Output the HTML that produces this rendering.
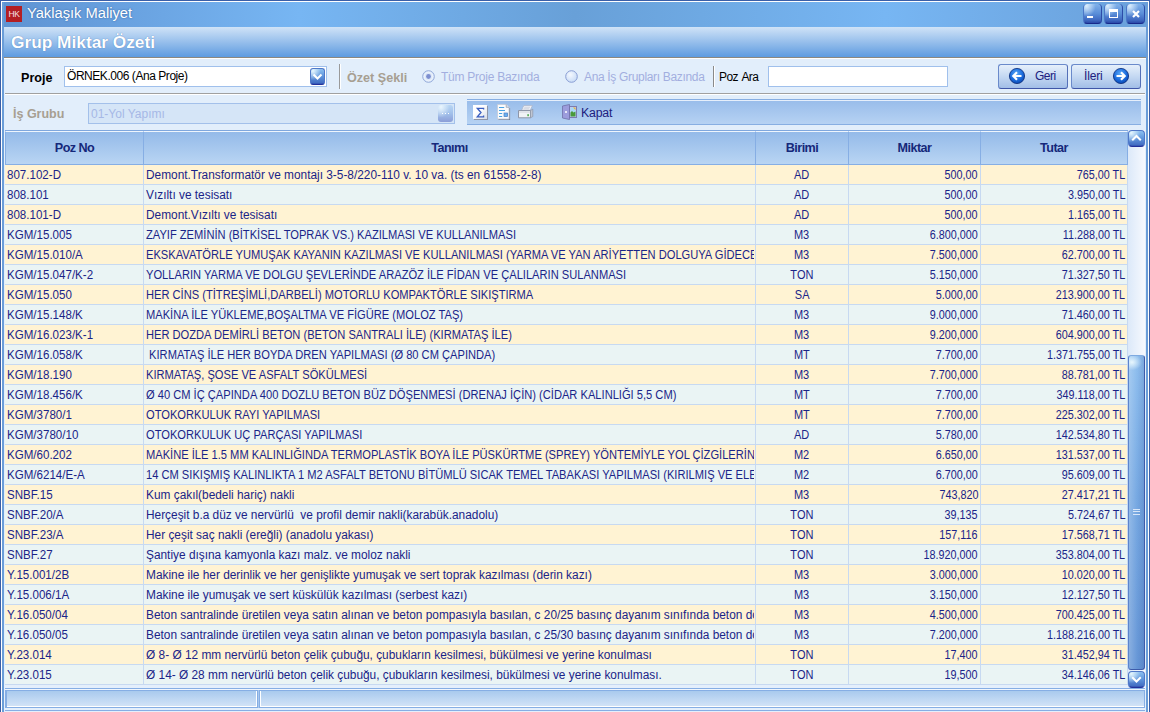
<!DOCTYPE html>
<html><head><meta charset="utf-8">
<style>
*{margin:0;padding:0;box-sizing:border-box}
html,body{width:1150px;height:712px;overflow:hidden;background:#E2EEFB;font-family:"Liberation Sans",sans-serif;font-size:12px;color:#000}
.abs{position:absolute}
svg{position:absolute;overflow:visible}
#title{position:absolute;left:0;top:0;width:1150px;height:27px;background:linear-gradient(90deg,#5F93D2 0%,#77B6F3 26%,#68A0D8 50%,#77B6F3 77%,#6AA0DA 100%)}
#hk{position:absolute;left:6px;top:6px;width:16px;height:16px;background:#B31E22;color:#F4E4E4;font-size:8.5px;line-height:16px;text-align:center;letter-spacing:-0.4px}
#ttext{position:absolute;left:27px;top:5px;font-size:14.7px;color:#fff;text-shadow:0 0 2px #3060A0}
.wb{position:absolute;top:4px;width:19px;height:20px;border-radius:4px;background:radial-gradient(ellipse at 15% 10%,rgba(230,245,255,0.9) 0%,rgba(200,230,255,0) 45%),linear-gradient(180deg,#7FB0EA 0%,#5A8ED8 50%,#3E68C0 85%,#2A48A8 100%);border-bottom:1px solid #16288A;border-right:1px solid #2C4CA8;border-left:1px solid #4C78C8}
#hdr{position:absolute;left:4px;top:27px;width:1142px;height:30px;background:linear-gradient(180deg,#D0E3F7 0%,#5E9BE0 100%)}
#hdrtext{position:absolute;left:11px;top:33px;font-size:17px;font-weight:bold;color:#fff;text-shadow:0 0 1px #4070B0}
#hline1{position:absolute;left:4px;top:57px;width:1142px;height:1px;background:#8C8880}
#hline2{position:absolute;left:4px;top:58px;width:1142px;height:1px;background:#fff}
.lbl{position:absolute;font-size:12px;white-space:nowrap}
.sep{position:absolute;width:1px;background:#8A8A8A}
.btn{position:absolute;height:25px;border:1px solid #6A8ACB;border-bottom-color:#3F56A8;border-right-color:#5470B8;border-radius:3px;background:linear-gradient(180deg,#E6F0FB 0%,#C4D8F2 50%,#A2BEE7 100%)}
#grid{position:absolute;left:5px;top:130px;width:1123px;height:1px;background:#7FA7DE}
.hc{position:absolute;top:131px;height:34px;border-right:1px solid #86AEE4;border-bottom:1px solid #86AEE4;border-top:1px solid #EEF5FD;background:linear-gradient(180deg,#94BAE9 0%,#B9D5F3 100%);font-weight:bold;color:#15287A;text-align:center;line-height:32px;font-size:12.6px;letter-spacing:-0.55px}
.r{position:absolute;left:5px;width:1123px;height:20px}
.r.o{background:#FFF3D3}
.r.e{background:#EAF4F4}
.c{position:absolute;top:0;height:20px;border-right:1px solid #C7D9F1;border-bottom:1px solid #C7D9F1;line-height:20px;color:#1A2488;white-space:pre;overflow:hidden;padding:0 2px;font-size:12.3px}
.c span{display:inline-block;transform-origin:0 50%}
.c1{left:0;width:139px}
.c1 span{transform:scaleX(0.94)}
.c2{left:139px;width:612px;padding-left:2px}
.c2 span{transform:scaleX(0.965)}
.clip{width:608px;overflow:hidden}
.c2.u span{transform:scaleX(0.905)}
.c3{left:751px;width:93px;text-align:center}
.c3 span{transform:scaleX(0.894);transform-origin:50% 50%}
.c4{left:844px;width:132px;text-align:right}
.c5{left:976px;width:147px;text-align:right}
.c4 span,.c5 span{transform:scaleX(0.878);transform-origin:100% 50%}
.sb{width:17px;height:17px;border-radius:4px;background:radial-gradient(ellipse at 15% 12%,rgba(235,250,255,0.95) 0%,rgba(200,230,255,0) 50%),linear-gradient(180deg,#8CC0F0 0%,#5E94DC 50%,#4570C4 90%,#3050B0 100%);border:1px solid #5078C8;border-bottom-color:#22309A}
</style></head><body>
<div id="title"></div>
<div id="hk">HK</div>
<div id="ttext">Yaklaşık Maliyet</div>
<div class="wb" style="left:1083px"></div>
<div class="wb" style="left:1104px"></div>
<div class="wb" style="left:1126px"></div>
<div class="abs" style="left:1087px;top:16px;width:6px;height:2px;background:#fff"></div>
<div class="abs" style="left:1109px;top:9px;width:9px;height:9px;border:1px solid #fff;border-top-width:3px"></div>
<svg style="left:1132px;top:10px" width="8" height="8" viewBox="0 0 8 8"><path d="M1 1L7 7M7 1L1 7" stroke="#fff" stroke-width="2.2"/></svg>
<div id="hdr"></div>
<div id="hdrtext" style="font-size:17.3px;top:32px">Grup Miktar Özeti</div>
<div id="hline1"></div><div id="hline2"></div>

<!-- row 1 -->
<div class="lbl" style="left:21px;top:71px;font-weight:bold;font-size:12.6px">Proje</div>
<div class="abs" style="left:64px;top:66px;width:263px;height:21px;background:#fff;border:1px solid #A0C0EC"></div>
<div class="lbl" style="left:67px;top:69px;font-size:12px;letter-spacing:-0.45px">ÖRNEK.006 (Ana Proje)</div>
<div class="abs" style="left:310px;top:68px;width:15px;height:17px;border-radius:3px;background:radial-gradient(ellipse at 15% 12%,rgba(235,250,255,0.95) 0%,rgba(200,230,255,0) 50%),linear-gradient(180deg,#8CC0F0 0%,#5E94DC 50%,#4570C4 90%,#3050B0 100%);border:1px solid #5078C8;border-bottom-color:#22309A"></div>
<svg style="left:310px;top:68px" width="15" height="17" viewBox="0 0 15 17"><path d="M3.5 6.5L7.5 10.5L11.5 6.5" stroke="#fff" stroke-width="2" fill="none"/></svg>
<div class="sep" style="left:339px;top:64px;height:25px;background:#9A9A9A"></div><div class="sep" style="left:340px;top:64px;height:25px;background:#fff"></div>
<div class="lbl" style="left:347px;top:71px;font-weight:bold;font-size:12.6px;color:#A79F92">Özet Şekli</div>
<svg style="left:422px;top:70px" width="13" height="13" viewBox="0 0 13 13"><circle cx="6.5" cy="6.5" r="5.8" fill="#DCE8F8" stroke="#94AADA" stroke-width="1"/><circle cx="6.5" cy="6.5" r="4.3" fill="none" stroke="#F2F6FD" stroke-width="0.8"/><circle cx="6.5" cy="6.5" r="2.4" fill="#7C8ED0"/></svg>
<div class="lbl" style="left:441px;top:70px;color:#A2AEDF;font-size:12px;letter-spacing:-0.25px">Tüm Proje Bazında</div>
<svg style="left:565px;top:70px" width="13" height="13" viewBox="0 0 13 13"><defs><radialGradient id="rg" cx="40%" cy="35%" r="70%"><stop offset="0" stop-color="#F4F8FE"/><stop offset="1" stop-color="#C6DAF6"/></radialGradient></defs><circle cx="6.5" cy="6.5" r="5.8" fill="url(#rg)" stroke="#8A9ED4" stroke-width="1"/></svg>
<div class="lbl" style="left:584px;top:70px;color:#A2AEDF;font-size:12px;letter-spacing:-0.33px">Ana İş Grupları Bazında</div>
<div class="sep" style="left:713px;top:66px;height:21px"></div><div class="sep" style="left:714px;top:66px;height:21px;background:#fff"></div>
<div class="lbl" style="left:719px;top:70px;font-size:12px;letter-spacing:-0.6px;word-spacing:1.5px">Poz Ara</div>
<div class="abs" style="left:768px;top:66px;width:180px;height:21px;background:#fff;border:1px solid #A0C0EC"></div>
<div class="btn" style="left:998px;top:64px;width:70px"></div>
<svg style="left:1009px;top:68px" width="16" height="16" viewBox="0 0 16 16"><defs><radialGradient id="cg" cx="45%" cy="35%" r="65%"><stop offset="0" stop-color="#5AAAF8"/><stop offset="0.65" stop-color="#1A6ADC"/><stop offset="1" stop-color="#0C48B0"/></radialGradient></defs><circle cx="8" cy="8" r="7.6" fill="url(#cg)" stroke="#082A78" stroke-width="0.8"/><path d="M12.5 8H4.5M8 4.3L4.3 8L8 11.7" stroke="#fff" stroke-width="2.2" fill="none"/></svg>
<div class="lbl" style="left:1035px;top:69px;color:#20207E;font-size:12px;letter-spacing:-0.5px">Geri</div>
<div class="btn" style="left:1071px;top:64px;width:70px"></div>
<div class="lbl" style="left:1084px;top:69px;color:#20207E;font-size:12px;letter-spacing:-0.15px">İleri</div>
<svg style="left:1113px;top:68px" width="16" height="16" viewBox="0 0 16 16"><circle cx="8" cy="8" r="7.6" fill="url(#cg)" stroke="#082A78" stroke-width="0.8"/><path d="M3.5 8H11.5M8 4.3L11.7 8L8 11.7" stroke="#fff" stroke-width="2.2" fill="none"/></svg>
<div class="abs" style="left:5px;top:93px;width:1140px;height:1px;background:#A0A0A0"></div>
<div class="abs" style="left:5px;top:94px;width:1140px;height:1px;background:#FFFFFF"></div>

<!-- row 2 -->
<div class="lbl" style="left:13px;top:107px;font-weight:bold;font-size:12.5px;color:#A79F92">İş Grubu</div>
<div class="abs" style="left:88px;top:103px;width:367px;height:21px;background:#D5E5F7;border:1px solid #A3C0EA"></div>
<div class="lbl" style="left:91px;top:107px;color:#A6B8E6;font-size:12px">01-Yol Yapımı</div>
<div class="abs" style="left:438px;top:105px;width:15px;height:17px;border-radius:3px;background:radial-gradient(ellipse at 20% 12%,rgba(240,250,255,0.9) 0%,rgba(240,250,255,0) 50%),linear-gradient(180deg,#B8D6F4 0%,#A2C0EA 50%,#8C9ED8 100%)"></div>
<div class="abs" style="left:442px;top:113px;width:1px;height:1px;background:#fff;box-shadow:3px 0 0 #fff,6px 0 0 #fff"></div>
<div class="abs" style="left:467px;top:99px;width:674px;height:26px;background:linear-gradient(180deg,#98BCEA 0%,#B6D2F3 100%);border-top:1px solid #87AEE2;border-bottom:1px solid #87AEE2"></div>
<div class="abs" style="left:467px;top:100px;width:674px;height:1px;background:#E6EFFB"></div>
<!-- sigma -->
<div class="abs" style="left:473px;top:105px;width:14px;height:14px;background:linear-gradient(135deg,#FFFFFF 40%,#D8DEE8 100%);box-shadow:1px 1px 0 #8E96A8"></div>
<svg style="left:473px;top:105px" width="14" height="14" viewBox="0 0 14 14"><path d="M10.6 4.6V3.3H4.3L8 7.5L4.3 11.8H10.6V10.5" stroke="#3A5EC0" stroke-width="1.3" fill="none"/></svg>
<!-- doc -->
<svg style="left:497px;top:104px" width="14" height="16" viewBox="0 0 14 16"><path d="M1.5 15.5H12.5V4" stroke="#7A8296" stroke-width="1.2" fill="none"/><path d="M0.5 0.5H9.2L12 3.3V15H0.5Z" fill="#FAFBFD" stroke="#C4CAD6" stroke-width="0.8"/><path d="M9.2 0.5V3.3H12" fill="#DDE2EA" stroke="#9AA2B4" stroke-width="0.8"/><path d="M2 3.5H7.2M2 6.5H8M2 9.5H5.2M2 12.5H5.2" stroke="#4AA2E2" stroke-width="1.1"/><rect x="7" y="9" width="3.6" height="3.6" fill="#6AB0F0" stroke="#4E7EC0" stroke-width="0.7"/></svg>
<!-- printer -->
<svg style="left:518px;top:105px" width="16" height="14" viewBox="0 0 16 14"><path d="M3.6 5.2L5.8 0.6H14.4L12.2 5.2Z" fill="#F6F8FC" stroke="#A8B0C4" stroke-width="0.7"/><path d="M6.2 2.2H12.2M5.4 3.8H11.4" stroke="#B8BED0" stroke-width="0.7"/><path d="M0.5 5.5H12.5V12.8H0.5Z" fill="#F0F2F6" stroke="#8E96A8" stroke-width="1"/><path d="M1 7H12" stroke="#C8CCD8" stroke-width="0.8"/><path d="M12.5 5.5L14.8 4.2V11.5L12.5 12.8Z" fill="#C0C6D2" stroke="#8E96A8" stroke-width="0.7"/><rect x="9.4" y="9.2" width="1.4" height="2" fill="#3AA03A"/></svg>
<!-- kapat -->
<svg style="left:562px;top:104px" width="16" height="16" viewBox="0 0 16 16"><rect x="7.5" y="2.5" width="7" height="11" fill="#C8C8F0" stroke="#7C7CB0" stroke-width="1"/><rect x="8.5" y="3.5" width="5" height="9" fill="#A8DAF4"/><path d="M8.5 12.5V8.5L10 7L11.5 8.5L13.5 7.5V12.5Z" fill="#4A9A3A"/><path d="M11 3.5H13.5V6Z" fill="#F0B030"/><path d="M0.5 2L7.5 0.5V15.5L0.5 14Z" fill="#9C9CDC" stroke="#7070A8" stroke-width="0.8"/><path d="M3 8H5M4 7V9" stroke="#fff" stroke-width="1"/></svg>
<div class="lbl" style="left:581px;top:106px;color:#20207E;font-size:12.3px;letter-spacing:-0.2px">Kapat</div>

<!-- grid -->
<div id="grid"></div>
<div class="hc" style="left:5px;width:139px;border-left:1px solid #86AEE4">Poz No</div>
<div class="hc" style="left:144px;width:612px">Tanımı</div>
<div class="hc" style="left:756px;width:93px">Birimi</div>
<div class="hc" style="left:849px;width:132px">Miktar</div>
<div class="hc" style="left:981px;width:147px">Tutar</div>
<div class="r o" style="top:165px"><div class="c c1"><span>807.102-D</span></div><div class="c c2 "><div class="clip"><span>Demont.Transformatör ve montajı 3-5-8/220-110 v. 10 va. (ts en 61558-2-8)</span></div></div><div class="c c3"><span>AD</span></div><div class="c c4"><span>500,00</span></div><div class="c c5"><span>765,00 TL</span></div></div>
<div class="r e" style="top:185px"><div class="c c1"><span>808.101</span></div><div class="c c2 "><div class="clip"><span>Vızıltı ve tesisatı</span></div></div><div class="c c3"><span>AD</span></div><div class="c c4"><span>500,00</span></div><div class="c c5"><span>3.950,00 TL</span></div></div>
<div class="r o" style="top:205px"><div class="c c1"><span>808.101-D</span></div><div class="c c2 "><div class="clip"><span>Demont.Vızıltı ve tesisatı</span></div></div><div class="c c3"><span>AD</span></div><div class="c c4"><span>500,00</span></div><div class="c c5"><span>1.165,00 TL</span></div></div>
<div class="r e" style="top:225px"><div class="c c1"><span>KGM/15.005</span></div><div class="c c2 u"><div class="clip"><span>ZAYIF ZEMİNİN (BİTKİSEL TOPRAK VS.) KAZILMASI VE KULLANILMASI</span></div></div><div class="c c3"><span>M3</span></div><div class="c c4"><span>6.800,000</span></div><div class="c c5"><span>11.288,00 TL</span></div></div>
<div class="r o" style="top:245px"><div class="c c1"><span>KGM/15.010/A</span></div><div class="c c2 u"><div class="clip"><span>EKSKAVATÖRLE YUMUŞAK KAYANIN KAZILMASI VE KULLANILMASI (YARMA VE YAN ARİYETTEN DOLGUYA GİDECEK</span></div></div><div class="c c3"><span>M3</span></div><div class="c c4"><span>7.500,000</span></div><div class="c c5"><span>62.700,00 TL</span></div></div>
<div class="r e" style="top:265px"><div class="c c1"><span>KGM/15.047/K-2</span></div><div class="c c2 u"><div class="clip"><span>YOLLARIN YARMA VE DOLGU ŞEVLERİNDE ARAZÖZ İLE FİDAN VE ÇALILARIN SULANMASI</span></div></div><div class="c c3"><span>TON</span></div><div class="c c4"><span>5.150,000</span></div><div class="c c5"><span>71.327,50 TL</span></div></div>
<div class="r o" style="top:285px"><div class="c c1"><span>KGM/15.050</span></div><div class="c c2 u"><div class="clip"><span>HER CİNS (TİTREŞİMLİ,DARBELİ) MOTORLU KOMPAKTÖRLE SIKIŞTIRMA</span></div></div><div class="c c3"><span>SA</span></div><div class="c c4"><span>5.000,00</span></div><div class="c c5"><span>213.900,00 TL</span></div></div>
<div class="r e" style="top:305px"><div class="c c1"><span>KGM/15.148/K</span></div><div class="c c2 u"><div class="clip"><span>MAKİNA İLE YÜKLEME,BOŞALTMA VE FİGÜRE (MOLOZ TAŞ)</span></div></div><div class="c c3"><span>M3</span></div><div class="c c4"><span>9.000,000</span></div><div class="c c5"><span>71.460,00 TL</span></div></div>
<div class="r o" style="top:325px"><div class="c c1"><span>KGM/16.023/K-1</span></div><div class="c c2 u"><div class="clip"><span>HER DOZDA DEMİRLİ BETON (BETON SANTRALI İLE) (KIRMATAŞ İLE)</span></div></div><div class="c c3"><span>M3</span></div><div class="c c4"><span>9.200,000</span></div><div class="c c5"><span>604.900,00 TL</span></div></div>
<div class="r e" style="top:345px"><div class="c c1"><span>KGM/16.058/K</span></div><div class="c c2 u"><div class="clip"><span> KIRMATAŞ İLE HER BOYDA DREN YAPILMASI (Ø 80 CM ÇAPINDA)</span></div></div><div class="c c3"><span>MT</span></div><div class="c c4"><span>7.700,00</span></div><div class="c c5"><span>1.371.755,00 TL</span></div></div>
<div class="r o" style="top:365px"><div class="c c1"><span>KGM/18.190</span></div><div class="c c2 u"><div class="clip"><span>KIRMATAŞ, ŞOSE VE ASFALT SÖKÜLMESİ</span></div></div><div class="c c3"><span>M3</span></div><div class="c c4"><span>7.700,000</span></div><div class="c c5"><span>88.781,00 TL</span></div></div>
<div class="r e" style="top:385px"><div class="c c1"><span>KGM/18.456/K</span></div><div class="c c2 u"><div class="clip"><span>Ø 40 CM İÇ ÇAPINDA 400 DOZLU BETON BÜZ DÖŞENMESİ (DRENAJ İÇİN) (CİDAR KALINLIĞI 5,5 CM)</span></div></div><div class="c c3"><span>MT</span></div><div class="c c4"><span>7.700,00</span></div><div class="c c5"><span>349.118,00 TL</span></div></div>
<div class="r o" style="top:405px"><div class="c c1"><span>KGM/3780/1</span></div><div class="c c2 u"><div class="clip"><span>OTOKORKULUK RAYI YAPILMASI</span></div></div><div class="c c3"><span>MT</span></div><div class="c c4"><span>7.700,00</span></div><div class="c c5"><span>225.302,00 TL</span></div></div>
<div class="r e" style="top:425px"><div class="c c1"><span>KGM/3780/10</span></div><div class="c c2 u"><div class="clip"><span>OTOKORKULUK UÇ PARÇASI YAPILMASI</span></div></div><div class="c c3"><span>AD</span></div><div class="c c4"><span>5.780,00</span></div><div class="c c5"><span>142.534,80 TL</span></div></div>
<div class="r o" style="top:445px"><div class="c c1"><span>KGM/60.202</span></div><div class="c c2 u"><div class="clip"><span>MAKİNE İLE 1.5 MM KALINLIĞINDA TERMOPLASTİK BOYA İLE PÜSKÜRTME (SPREY) YÖNTEMİYLE YOL ÇİZGİLERİNİN</span></div></div><div class="c c3"><span>M2</span></div><div class="c c4"><span>6.650,00</span></div><div class="c c5"><span>131.537,00 TL</span></div></div>
<div class="r e" style="top:465px"><div class="c c1"><span>KGM/6214/E-A</span></div><div class="c c2 u"><div class="clip"><span>14 CM SIKIŞMIŞ KALINLIKTA 1 M2 ASFALT BETONU BİTÜMLÜ SICAK TEMEL TABAKASI YAPILMASI (KIRILMIŞ VE ELEK</span></div></div><div class="c c3"><span>M2</span></div><div class="c c4"><span>6.700,00</span></div><div class="c c5"><span>95.609,00 TL</span></div></div>
<div class="r o" style="top:485px"><div class="c c1"><span>SNBF.15</span></div><div class="c c2 "><div class="clip"><span>Kum çakıl(bedeli hariç) nakli</span></div></div><div class="c c3"><span>M3</span></div><div class="c c4"><span>743,820</span></div><div class="c c5"><span>27.417,21 TL</span></div></div>
<div class="r e" style="top:505px"><div class="c c1"><span>SNBF.20/A</span></div><div class="c c2 "><div class="clip"><span>Herçeşit b.a düz ve nervürlü  ve profil demir nakli(karabük.anadolu)</span></div></div><div class="c c3"><span>TON</span></div><div class="c c4"><span>39,135</span></div><div class="c c5"><span>5.724,67 TL</span></div></div>
<div class="r o" style="top:525px"><div class="c c1"><span>SNBF.23/A</span></div><div class="c c2 "><div class="clip"><span>Her çeşit saç nakli (ereğli) (anadolu yakası)</span></div></div><div class="c c3"><span>TON</span></div><div class="c c4"><span>157,116</span></div><div class="c c5"><span>17.568,71 TL</span></div></div>
<div class="r e" style="top:545px"><div class="c c1"><span>SNBF.27</span></div><div class="c c2 "><div class="clip"><span>Şantiye dışına kamyonla kazı malz. ve moloz nakli</span></div></div><div class="c c3"><span>TON</span></div><div class="c c4"><span>18.920,000</span></div><div class="c c5"><span>353.804,00 TL</span></div></div>
<div class="r o" style="top:565px"><div class="c c1"><span>Y.15.001/2B</span></div><div class="c c2 "><div class="clip"><span>Makine ile her derinlik ve her genişlikte yumuşak ve sert toprak kazılması (derin kazı)</span></div></div><div class="c c3"><span>M3</span></div><div class="c c4"><span>3.000,000</span></div><div class="c c5"><span>10.020,00 TL</span></div></div>
<div class="r e" style="top:585px"><div class="c c1"><span>Y.15.006/1A</span></div><div class="c c2 "><div class="clip"><span>Makine ile yumuşak ve sert küskülük kazılması (serbest kazı)</span></div></div><div class="c c3"><span>M3</span></div><div class="c c4"><span>3.150,000</span></div><div class="c c5"><span>12.127,50 TL</span></div></div>
<div class="r o" style="top:605px"><div class="c c1"><span>Y.16.050/04</span></div><div class="c c2 "><div class="clip"><span>Beton santralinde üretilen veya satın alınan ve beton pompasıyla basılan, c 20/25 basınç dayanım sınıfında beton dökülmesi</span></div></div><div class="c c3"><span>M3</span></div><div class="c c4"><span>4.500,000</span></div><div class="c c5"><span>700.425,00 TL</span></div></div>
<div class="r e" style="top:625px"><div class="c c1"><span>Y.16.050/05</span></div><div class="c c2 "><div class="clip"><span>Beton santralinde üretilen veya satın alınan ve beton pompasıyla basılan, c 25/30 basınç dayanım sınıfında beton dökülmesi</span></div></div><div class="c c3"><span>M3</span></div><div class="c c4"><span>7.200,000</span></div><div class="c c5"><span>1.188.216,00 TL</span></div></div>
<div class="r o" style="top:645px"><div class="c c1"><span>Y.23.014</span></div><div class="c c2 "><div class="clip"><span>Ø 8- Ø 12 mm nervürlü beton çelik çubuğu, çubukların kesilmesi, bükülmesi ve yerine konulması</span></div></div><div class="c c3"><span>TON</span></div><div class="c c4"><span>17,400</span></div><div class="c c5"><span>31.452,94 TL</span></div></div>
<div class="r e" style="top:665px"><div class="c c1"><span>Y.23.015</span></div><div class="c c2 "><div class="clip"><span>Ø 14- Ø 28 mm nervürlü beton çelik çubuğu, çubukların kesilmesi, bükülmesi ve yerine konulması.</span></div></div><div class="c c3"><span>TON</span></div><div class="c c4"><span>19,500</span></div><div class="c c5"><span>34.146,06 TL</span></div></div>

<!-- status bar -->
<div class="abs" style="left:4px;top:685px;width:1142px;height:27px;background:#E4EFFC"></div>
<div class="abs" style="left:5px;top:688px;width:1140px;height:1px;background:#86AEE4"></div>
<div class="abs" style="left:5px;top:689px;width:1140px;height:1px;background:#F0F6FD"></div>
<div class="abs" style="left:5px;top:690px;width:253px;height:18px;border:1px solid #86AEE4;border-left-width:2px;background:linear-gradient(180deg,#A9CAEE 0%,#D4E4F7 100%);box-shadow:inset -1px -1px 0 #FFFFFF"></div><div class="abs" style="left:258px;top:690px;width:1px;height:18px;background:#A8C8EE"></div>
<div class="abs" style="left:259px;top:690px;width:886px;height:18px;border:1px solid #86AEE4;background:linear-gradient(180deg,#A9CAEE 0%,#D4E4F7 100%);box-shadow:inset 1px -1px 0 #FFFFFF"></div>
<div class="abs" style="left:5px;top:710px;width:1140px;height:1px;background:#86AEE4"></div>
<!-- scrollbar -->
<div class="abs" style="left:1128px;top:130px;width:17px;height:558px;background:linear-gradient(90deg,#DCE9F9 0%,#F6F9FE 100%)"></div>
<div class="abs" style="left:1128px;top:355px;width:17px;height:315px;border-radius:3px;border-left:1px solid #5C84CC;border-right:1px solid #3E5CAA;border-bottom:1px solid #3E5CAA;border-top:1px solid #7FAAE0;background:radial-gradient(ellipse 10px 8px at 20% 2%,rgba(240,252,255,0.9) 0%,rgba(240,252,255,0) 100%),linear-gradient(90deg,rgba(255,255,255,0.22) 0%,rgba(255,255,255,0) 55%,rgba(20,40,120,0.14) 100%),linear-gradient(180deg,#8EBEEE 0%,#76A8E2 45%,#6696D6 100%)"></div>
<div class="abs" style="left:1133px;top:509px;width:7px;height:1px;background:#D8E6F8;box-shadow:0 2px 0 #D8E6F8,0 5px 0 #D8E6F8"></div>
<div class="abs sb" style="left:1128px;top:130px"></div>
<svg style="left:1128px;top:130px" width="17" height="17" viewBox="0 0 17 17"><path d="M4.2 10.2L8.5 6L12.8 10.2" stroke="#fff" stroke-width="2" fill="none"/></svg>
<div class="abs sb" style="left:1128px;top:671px"></div>
<svg style="left:1128px;top:671px" width="17" height="17" viewBox="0 0 17 17"><path d="M4.2 6.3L8.5 10.5L12.8 6.3" stroke="#fff" stroke-width="2" fill="none"/></svg>

<!-- window border -->
<div class="abs" style="left:0;top:0;width:1px;height:712px;background:#3A5FA8"></div>
<div class="abs" style="left:1px;top:1px;width:1px;height:711px;background:#fff"></div>
<div class="abs" style="left:2px;top:2px;width:2px;height:710px;background:#6A9DD8"></div>
<div class="abs" style="left:0;top:0;width:1150px;height:1px;background:#3A5FA8"></div>
<div class="abs" style="left:1px;top:1px;width:1148px;height:1px;background:#fff"></div>
<div class="abs" style="left:1146px;top:2px;width:2px;height:710px;background:#6A9DD8"></div>
<div class="abs" style="left:1148px;top:1px;width:1px;height:711px;background:#fff"></div>
<div class="abs" style="left:1149px;top:0;width:1px;height:712px;background:#3A5FA8"></div>
</body></html>
